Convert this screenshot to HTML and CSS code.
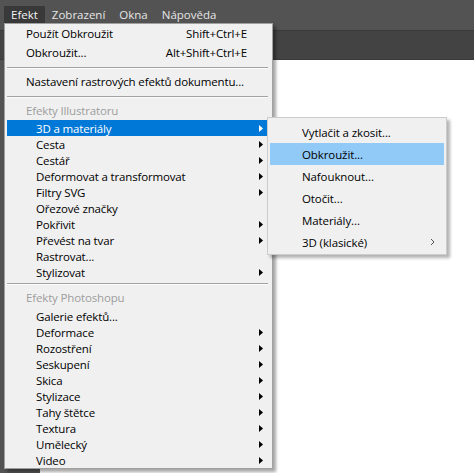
FILE: index.html
```html
<!DOCTYPE html>
<html lang="cs">
<head>
<meta charset="utf-8">
<title>Efekt menu</title>
<link rel="stylesheet" href="styles.css">
</head>
<body>
<div class="app">
  <div class="menubar">
    <div class="mb-item active">Efekt</div>
    <div class="mb-item">Zobrazení</div>
    <div class="mb-item">Okna</div>
    <div class="mb-item">Nápověda</div>
  </div>
  <div class="tabbar"></div>
  <div class="workspace">
    <div class="tools"></div>
    <div class="canvas"></div>
  </div>

  <ul class="menu">
    <li class="item top"><span class="label">Použít Obkroužit</span><span class="key">Shift+Ctrl+E</span></li>
    <li class="item top"><span class="label">Obkroužit...</span><span class="key">Alt+Shift+Ctrl+E</span></li>
    <li class="sep"></li>
    <li class="item top"><span class="label">Nastavení rastrových efektů dokumentu...</span></li>
    <li class="sep"></li>
    <li class="header">Efekty Illustratoru</li>
    <li class="item active">
      <span class="label">3D a materiály</span>
      <svg class="tri" viewBox="0 0 4 7"><path d="M0 0L4 3.5L0 7Z"/></svg>
      <ul class="submenu">
        <li class="sitem">Vytlačit a zkosit...</li>
        <li class="sitem hl">Obkroužit...</li>
        <li class="sitem">Nafouknout...</li>
        <li class="sitem">Otočit...</li>
        <li class="sitem">Materiály...</li>
        <li class="sitem"><span>3D (klasické)</span><svg class="chev" viewBox="0 0 5 8"><path d="M1 1L4 4L1 7"/></svg></li>
      </ul>
    </li>
    <li class="item"><span class="label">Cesta</span><svg class="tri" viewBox="0 0 4 7"><path d="M0 0L4 3.5L0 7Z"/></svg></li>
    <li class="item"><span class="label">Cestář</span><svg class="tri" viewBox="0 0 4 7"><path d="M0 0L4 3.5L0 7Z"/></svg></li>
    <li class="item"><span class="label">Deformovat a transformovat</span><svg class="tri" viewBox="0 0 4 7"><path d="M0 0L4 3.5L0 7Z"/></svg></li>
    <li class="item"><span class="label">Filtry SVG</span><svg class="tri" viewBox="0 0 4 7"><path d="M0 0L4 3.5L0 7Z"/></svg></li>
    <li class="item"><span class="label">Ořezové značky</span></li>
    <li class="item"><span class="label">Pokřivit</span><svg class="tri" viewBox="0 0 4 7"><path d="M0 0L4 3.5L0 7Z"/></svg></li>
    <li class="item"><span class="label">Převést na tvar</span><svg class="tri" viewBox="0 0 4 7"><path d="M0 0L4 3.5L0 7Z"/></svg></li>
    <li class="item"><span class="label">Rastrovat...</span></li>
    <li class="item"><span class="label">Stylizovat</span><svg class="tri" viewBox="0 0 4 7"><path d="M0 0L4 3.5L0 7Z"/></svg></li>
    <li class="sep sm"></li>
    <li class="header tall">Efekty Photoshopu</li>
    <li class="item"><span class="label">Galerie efektů...</span></li>
    <li class="item"><span class="label">Deformace</span><svg class="tri" viewBox="0 0 4 7"><path d="M0 0L4 3.5L0 7Z"/></svg></li>
    <li class="item"><span class="label">Rozostření</span><svg class="tri" viewBox="0 0 4 7"><path d="M0 0L4 3.5L0 7Z"/></svg></li>
    <li class="item"><span class="label">Seskupení</span><svg class="tri" viewBox="0 0 4 7"><path d="M0 0L4 3.5L0 7Z"/></svg></li>
    <li class="item"><span class="label">Skica</span><svg class="tri" viewBox="0 0 4 7"><path d="M0 0L4 3.5L0 7Z"/></svg></li>
    <li class="item"><span class="label">Stylizace</span><svg class="tri" viewBox="0 0 4 7"><path d="M0 0L4 3.5L0 7Z"/></svg></li>
    <li class="item"><span class="label">Tahy štětce</span><svg class="tri" viewBox="0 0 4 7"><path d="M0 0L4 3.5L0 7Z"/></svg></li>
    <li class="item"><span class="label">Textura</span><svg class="tri" viewBox="0 0 4 7"><path d="M0 0L4 3.5L0 7Z"/></svg></li>
    <li class="item"><span class="label">Umělecký</span><svg class="tri" viewBox="0 0 4 7"><path d="M0 0L4 3.5L0 7Z"/></svg></li>
    <li class="item"><span class="label">Video</span><svg class="tri" viewBox="0 0 4 7"><path d="M0 0L4 3.5L0 7Z"/></svg></li>
  </ul>
</div>
</body>
</html>
```

FILE: styles.css
```css
* {
  box-sizing: border-box;
  margin: 0;
  padding: 0;
}

body {
  margin: 0;
  width: 474px;
  height: 473px;
  overflow: hidden;
  background: #535353;
  font-family: "Open Sans", "Noto Sans", sans-serif;
}

.app {
  position: relative;
  width: 474px;
  height: 473px;
  display: flex;
  flex-direction: column;
}

/* top menu bar */
.menubar {
  height: 30px;
  flex: none;
  background: #535353;
  display: flex;
  align-items: flex-start;
  padding-left: 4px;
  font-size: 11.5px;
  color: #e6e6e6;
}

.mb-item {
  margin-top: 6px;
  height: 17px;
  line-height: 17px;
  padding: 0 7px;
  white-space: nowrap;
}

.mb-item.active {
  background: #393939;
  color: #f4f4f4;
}

.tabbar {
  height: 30px;
  flex: none;
  background: #434343;
  border-top: 1px solid #3a3a3a;
  border-bottom: 1px solid #3a3a3a;
}

.workspace {
  flex: 1;
  display: flex;
}

.tools {
  width: 40px;
  background: #535353;
}

.canvas {
  flex: 1;
  background: #ffffff;
}

/* dropdown menu */
.menu {
  position: absolute;
  left: 4px;
  top: 23px;
  width: 269px;
  list-style: none;
  background: #f0f0f0;
  border: 1px solid #a0a0a0;
  padding: 0 4px 0 2px;
  box-shadow: 3px 3px 3px rgba(0, 0, 0, 0.35);
  font-size: 11.5px;
  letter-spacing: -0.15px;
  color: #000;
}

.item {
  position: relative;
  display: flex;
  align-items: center;
  height: 16px;
  padding-left: 29px;
  white-space: nowrap;
}

.item.top {
  height: 19px;
  padding-left: 19px;
  padding-right: 21px;
}

.label {
  flex: 1;
}

.key {
  white-space: nowrap;
}

.tri {
  width: 4px;
  height: 7px;
  margin-right: 5px;
  fill: #000;
  flex: none;
}

.item.active {
  background: #0078d7;
  color: #fff;
}

.item.active > .tri {
  fill: #fff;
}

.sep {
  height: 10px;
  padding-top: 5px;
}

.sep.sm {
  height: 8px;
  padding-top: 3px;
}

.sep::before {
  content: "";
  display: block;
  border-top: 1px solid #a3a3a3;
  border-bottom: 1px solid #fbfbfb;
}

.header {
  height: 19px;
  line-height: 19px;
  padding-left: 19px;
  color: #9d9d9d;
}

.header.tall {
  height: 20px;
  line-height: 20px;
}

/* submenu */
.submenu {
  position: absolute;
  left: calc(100% - 1px);
  top: -3px;
  width: 180px;
  list-style: none;
  background: #f0f0f0;
  border: 1px solid #cccccc;
  padding: 3px 2px 1px;
  box-shadow: 3px 3px 3px rgba(0, 0, 0, 0.3);
  color: #000;
  letter-spacing: -0.1px;
  font-size: 11.5px;
  z-index: 2;
}

.sitem {
  display: flex;
  align-items: center;
  height: 22px;
  padding-left: 32px;
  white-space: nowrap;
}

.sitem.hl {
  background: #91c9f7;
}

.chev {
  width: 5px;
  height: 8px;
  margin-left: auto;
  margin-right: 9px;
  fill: none;
  stroke: #555;
  stroke-width: 1;
}
```
